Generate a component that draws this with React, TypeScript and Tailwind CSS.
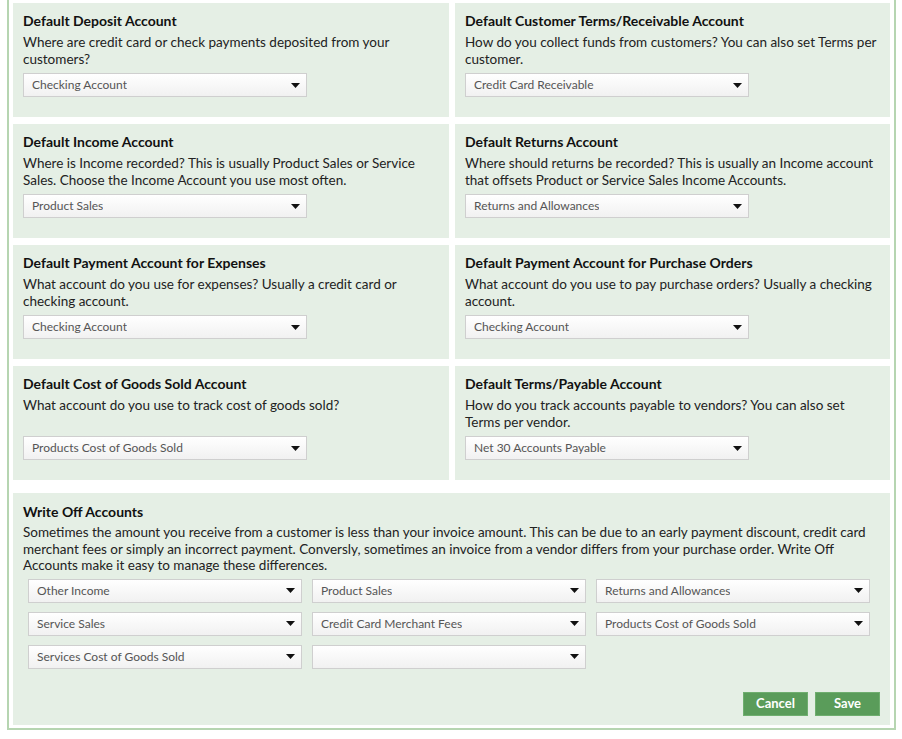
import { Fragment } from "react";

type Card = { title: string; desc: string[]; value: string };

const cards: Card[] = [
  {
    title: "Default Deposit Account",
    desc: ["Where are credit card or check payments deposited from your", "customers?"],
    value: "Checking Account",
  },
  {
    title: "Default Customer Terms/Receivable Account",
    desc: ["How do you collect funds from customers? You can also set Terms per", "customer."],
    value: "Credit Card Receivable",
  },
  {
    title: "Default Income Account",
    desc: ["Where is Income recorded? This is usually Product Sales or Service", "Sales. Choose the Income Account you use most often."],
    value: "Product Sales",
  },
  {
    title: "Default Returns Account",
    desc: ["Where should returns be recorded? This is usually an Income account", "that offsets Product or Service Sales Income Accounts."],
    value: "Returns and Allowances",
  },
  {
    title: "Default Payment Account for Expenses",
    desc: ["What account do you use for expenses? Usually a credit card or", "checking account."],
    value: "Checking Account",
  },
  {
    title: "Default Payment Account for Purchase Orders",
    desc: ["What account do you use to pay purchase orders? Usually a checking", "account."],
    value: "Checking Account",
  },
  {
    title: "Default Cost of Goods Sold Account",
    desc: ["What account do you use to track cost of goods sold?"],
    value: "Products Cost of Goods Sold",
  },
  {
    title: "Default Terms/Payable Account",
    desc: ["How do you track accounts payable to vendors? You can also set", "Terms per vendor."],
    value: "Net 30 Accounts Payable",
  },
];

const writeOffText = [
  "Sometimes the amount you receive from a customer is less than your invoice amount. This can be due to an early payment discount, credit card",
  "merchant fees or simply an incorrect payment. Conversly, sometimes an invoice from a vendor differs from your purchase order. Write Off",
  "Accounts make it easy to manage these differences.",
];

const writeOffs = [
  "Other Income",
  "Product Sales",
  "Returns and Allowances",
  "Service Sales",
  "Credit Card Merchant Fees",
  "Products Cost of Goods Sold",
  "Services Cost of Goods Sold",
  "",
];

function Lines({ lines }: { lines: string[] }) {
  return (
    <>
      {lines.map((l, i) => (
        <Fragment key={i}>
          {i > 0 && <br />}
          <span className="whitespace-nowrap">{l}</span>
        </Fragment>
      ))}
    </>
  );
}

function Select({ value, className = "" }: { value: string; className?: string }) {
  return (
    <div
      className={`flex h-[24px] items-center justify-between border border-[#cfcfcf] bg-gradient-to-b from-white to-[#f1f1f1] pl-[8px] pr-[6px] text-[12px] text-[#555] ${className}`}
    >
      <span className="truncate">{value}</span>
      <svg width="9" height="5" viewBox="0 0 9 5" className="shrink-0">
        <path d="M0 0h9L4.5 5z" fill="#111" />
      </svg>
    </div>
  );
}

export default function App() {
  return (
    <div className="min-h-[739px] bg-white" style={{ fontFamily: "Lato, 'Open Sans', sans-serif" }}>
      <div className="ml-[7px] w-[889px] border-x-2 border-b-2 border-[#b6d5b1] px-[4px] pt-[3px] pb-[3px] text-[#222]">
        <div className="grid grid-cols-[436px_435px] gap-x-[6px] gap-y-[7px]">
          {cards.map((c, i) => (
            <div key={i} className="h-[114px] bg-[#e5efe5] pl-[10px] pr-[8px] pt-[9px]">
              <h3 className="text-[14px] font-bold leading-[17px] text-[#111]">{c.title}</h3>
              <p className="mt-[5px] min-h-[34px] text-[13.5px] leading-[17px]">
                <Lines lines={c.desc} />
              </p>
              <Select value={c.value} className="mt-[5px] w-[284px]" />
            </div>
          ))}
        </div>

        <div className="mt-[13px] bg-[#e5efe5] pl-[10px] pr-[10px] pt-[10px] pb-[9px]">
          <h3 className="text-[14px] font-bold leading-[17px] text-[#111]">Write Off Accounts</h3>
          <p className="mt-[4px] text-[13.5px] leading-[16.5px]">
            <Lines lines={writeOffText} />
          </p>
          <div className="mt-[5px] ml-[5px] grid grid-cols-[274px_274px_274px] gap-x-[10px] gap-y-[9px]">
            {writeOffs.map((v, i) => (
              <Select key={i} value={v} />
            ))}
          </div>
          <div className="mt-[23px] flex justify-end gap-[7px]">
            <button className="h-[24px] w-[65px] border border-[#6fae6f] bg-[#5a9c5a] text-[13px] font-bold text-white">
              Cancel
            </button>
            <button className="h-[24px] w-[65px] border border-[#6fae6f] bg-[#5a9c5a] text-[13px] font-bold text-white">
              Save
            </button>
          </div>
        </div>
      </div>
    </div>
  );
}
